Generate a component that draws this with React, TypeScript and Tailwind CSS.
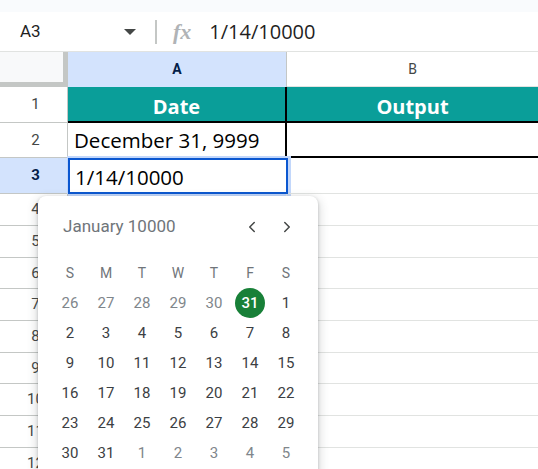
import { ChevronLeft, ChevronRight } from "lucide-react";

const rowHeights = [36, 35, 36, 32, 32, 31, 32, 32, 31, 32, 32, 31];

const weekdays = ["S", "M", "T", "W", "T", "F", "S"];

// [day, inMonth]
const days: [number, boolean][][] = [
  [[26, false], [27, false], [28, false], [29, false], [30, false], [31, false], [1, true]],
  [[2, true], [3, true], [4, true], [5, true], [6, true], [7, true], [8, true]],
  [[9, true], [10, true], [11, true], [12, true], [13, true], [14, true], [15, true]],
  [[16, true], [17, true], [18, true], [19, true], [20, true], [21, true], [22, true]],
  [[23, true], [24, true], [25, true], [26, true], [27, true], [28, true], [29, true]],
  [[30, true], [31, true], [1, false], [2, false], [3, false], [4, false], [5, false]],
];

function Calendar() {
  return (
    <div className="absolute left-[38px] top-[196px] w-[280px] h-[300px] rounded-lg bg-white shadow-[0_1px_3px_rgba(60,64,67,0.3),0_4px_8px_3px_rgba(60,64,67,0.15)] font-['Roboto',sans-serif]">
      {/* Header */}
      <div className="h-[62px] flex items-center pl-[25px] pr-[14px]">
        <span className="text-[17px] text-[#70757a] flex-1">January 10000</span>
        <div className="flex items-center gap-[17px] text-[#444746] mr-[8px]">
          <ChevronLeft size={18} strokeWidth={2} />
          <ChevronRight size={18} strokeWidth={2} />
        </div>
      </div>
      {/* Weekdays */}
      <div className="px-[14px] grid grid-cols-7">
        {weekdays.map((d, i) => (
          <div key={i} className="h-[30px] flex items-center justify-center text-[14px] text-[#70757a]">
            {d}
          </div>
        ))}
      </div>
      {/* Days */}
      <div className="px-[14px] grid grid-cols-7">
        {days.flat().map(([d, inMonth], i) => {
          const selected = i === 5;
          return (
            <div key={i} className="h-[30px] flex items-center justify-center">
              {selected ? (
                <span className="w-[30px] h-[30px] rounded-full bg-[#188038] text-white text-[15px] font-medium flex items-center justify-center">
                  {d}
                </span>
              ) : (
                <span className={`text-[15px] ${inMonth ? "text-[#3c4043]" : "text-[#80868b]"}`}>{d}</span>
              )}
            </div>
          );
        })}
      </div>
    </div>
  );
}

export default function App() {
  return (
    <div className="relative w-[538px] h-[469px] overflow-hidden bg-white font-['Roboto',sans-serif]">
      {/* Top band */}
      <div className="h-[12px] bg-[#f9fbfd]" />

      {/* Formula bar */}
      <div className="h-[40px] flex items-center border-b border-[#e1e3e1]">
        <span className="ml-[20px] w-[104px] text-[17px] text-[#1f1f1f]">A3</span>
        <span className="w-0 h-0 border-l-[6px] border-r-[6px] border-t-[6px] border-l-transparent border-r-transparent border-t-[#444746]" />
        <span className="ml-[19px] w-[2px] h-[24px] bg-[#c4c7c5]" />
        <span className="ml-[16px] text-[22px] italic font-bold text-[#b0b3b6] font-['Liberation_Serif',serif] leading-none">
          fx
        </span>
        <span className="ml-[18px] text-[20px] text-[#1f1f1f] font-['Open_Sans',sans-serif]">1/14/10000</span>
      </div>

      {/* Column headers */}
      <div className="flex h-[35px]">
        <div className="w-[68px] bg-[#f8f9fa] border-r-[5px] border-b-[5px] border-[#c4c7c5]" />
        <div className="w-[219px] bg-[#d3e3fd] border-r border-[#c4c7c5] flex items-center justify-center text-[14px] font-bold text-[#041e49]">
          A
        </div>
        <div className="flex-1 border-b border-[#e1e3e1] flex items-center justify-center text-[14px] text-[#444746]">
          B
        </div>
      </div>

      {/* Rows */}
      {rowHeights.map((h, i) => {
        const n = i + 1;
        const active = n === 3;
        return (
          <div key={n} className="flex" style={{ height: h }}>
            <div
              className={`w-[68px] shrink-0 border-b border-r border-[#c4c7c5] flex items-center justify-center pl-[4px] text-[15px] ${
                active ? "bg-[#d3e3fd] font-bold text-[#041e49]" : "text-[#444746]"
              }`}
            >
              {n}
            </div>
            {n === 1 && (
              <>
                <div className="w-[219px] bg-[#0a9e99] border-r-2 border-b-2 border-black flex items-center justify-center pt-[5px] text-white font-bold text-[20px] font-['Open_Sans',sans-serif]">
                  Date
                </div>
                <div className="flex-1 bg-[#0a9e99] border-b-2 border-black flex items-center justify-center pt-[5px] text-white font-bold text-[20px] font-['Open_Sans',sans-serif]">
                  Output
                </div>
              </>
            )}
            {n === 2 && (
              <>
                <div className="w-[219px] border-r-2 border-b-2 border-black flex items-center pl-[6px] pt-[2px] text-[20.5px] text-black font-['Open_Sans',sans-serif]">
                  December 31, 9999
                </div>
                <div className="flex-1 border-b-2 border-black" />
              </>
            )}
            {n === 3 && (
              <>
                <div className="w-[220px] border-2 border-[#0b57d0] flex items-center pl-[5px] pt-[2px] text-[20.5px] text-black font-['Open_Sans',sans-serif] shadow-[1px_0_0_2px_#c2d7fb]">
                  1/14/10000
                </div>
                <div className="flex-1 border-b border-[#e1e3e1]" />
              </>
            )}
            {n > 3 && (
              <>
                <div className="w-[219px] border-r border-b border-[#e1e3e1]" />
                <div className="flex-1 border-b border-[#e1e3e1]" />
              </>
            )}
          </div>
        );
      })}

      <Calendar />
    </div>
  );
}
